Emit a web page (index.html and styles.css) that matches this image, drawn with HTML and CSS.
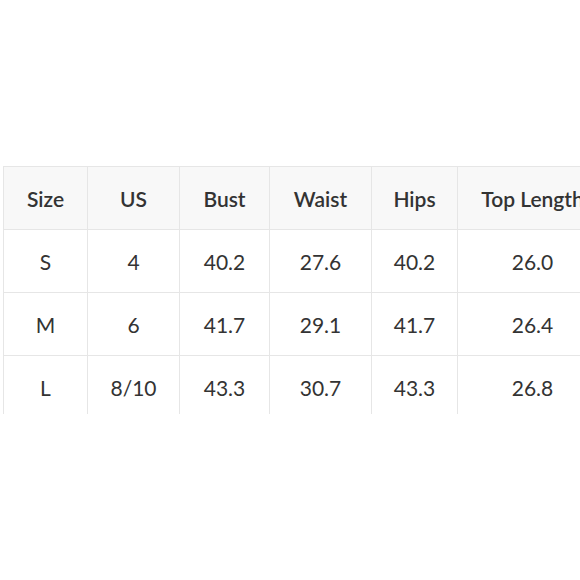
FILE: index.html
```html
<!DOCTYPE html>
<html>
<head>
<meta charset="utf-8">
<link rel="stylesheet" href="styles.css">
</head>
<body>
<div class="page">
  <div class="clip">
    <table class="chart">
      <colgroup>
        <col class="c1"><col class="c2"><col class="c3"><col class="c4"><col class="c5"><col class="c6">
      </colgroup>
      <thead>
        <tr><th>Size</th><th>US</th><th>Bust</th><th>Waist</th><th>Hips</th><th>Top Length</th></tr>
      </thead>
      <tbody>
        <tr><td>S</td><td>4</td><td>40.2</td><td>27.6</td><td>40.2</td><td>26.0</td></tr>
        <tr><td>M</td><td>6</td><td>41.7</td><td>29.1</td><td>41.7</td><td>26.4</td></tr>
        <tr><td>L</td><td>8/10</td><td>43.3</td><td>30.7</td><td>43.3</td><td>26.8</td></tr>
      </tbody>
    </table>
  </div>
</div>
</body>
</html>
```

FILE: styles.css
```css
html, body {
  margin: 0;
  padding: 0;
  background: #ffffff;
}
.page {
  width: 580px;
  height: 580px;
  padding: 166px 0 0 3px;
  box-sizing: border-box;
}
.clip {
  width: 577px;
  height: 248px;
  overflow: hidden;
}
.chart {
  border-collapse: collapse;
  table-layout: fixed;
  width: 604px;
  font-family: Lato, "Liberation Sans", sans-serif;
  font-size: 21px;
  color: #333333;
}
.c1 { width: 84px; }
.c2 { width: 92px; }
.c3 { width: 90px; }
.c4 { width: 102px; }
.c5 { width: 86px; }
.c6 { width: 150px; }
.chart th, .chart td {
  border: 1px solid #e6e6e6;
  height: 62px;
  padding: 0;
  text-align: center;
  vertical-align: middle;
  white-space: nowrap;
}
.chart th {
  background: #f8f8f8;
  font-weight: 600;
  color: #333333;
}
.chart td {
  font-weight: 400;
}
```
